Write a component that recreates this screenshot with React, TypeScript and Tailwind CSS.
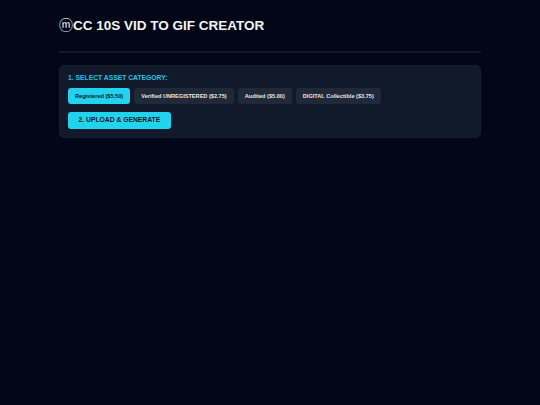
const categories = [
  { label: 'Registered ($5.50)', active: true },
  { label: 'Verified UNREGISTERED ($2.75)', active: false },
  { label: 'Audited ($5.00)', active: false },
  { label: 'DIGITAL Collectible ($3.75)', active: false },
];

export default function App() {
  return (
    <div className="min-h-[405px] bg-[#020617] px-[59px] py-4 font-['Liberation_Sans','Noto_Sans_CJK_SC',sans-serif] text-white">
      <header className="border-b-2 border-[#111827] pb-[16px]">
        <h1 className="text-[13.5px] leading-[18px] font-bold text-[#f3f4f6]">
          <span className="font-normal text-[14px]">ⓜ</span>CC 10S VID TO GIF CREATOR
        </h1>
      </header>

      <section className="mt-[12px] rounded-[5px] border border-[#151e2f] bg-[#111a2b] px-[8px] py-[8px]">
        <p className="text-[6.75px] leading-[8px] font-bold text-[#22c3e3]">1. SELECT ASSET CATEGORY:</p>

        <div className="mt-[6px] flex gap-[4px]">
          {categories.map((cat) => (
            <button
              key={cat.label}
              className={
                cat.active
                  ? 'rounded-[3px] bg-[#22d3ee] px-[7px] py-[4.85px] text-[5.6px] leading-[6px] font-bold text-[#0f172a]'
                  : 'rounded-[3px] bg-[#1f2937] px-[7px] py-[4.85px] text-[5.6px] leading-[6px] font-bold text-[#e5e7eb]'
              }
            >
              {cat.label}
            </button>
          ))}
        </div>

        <button className="mt-[8px] rounded-[3px] bg-[#22d3ee] px-[10.5px] py-[4.65px] text-[6.75px] leading-[8px] font-bold text-[#0f172a]">
          2. UPLOAD &amp; GENERATE
        </button>
      </section>
    </div>
  );
}
